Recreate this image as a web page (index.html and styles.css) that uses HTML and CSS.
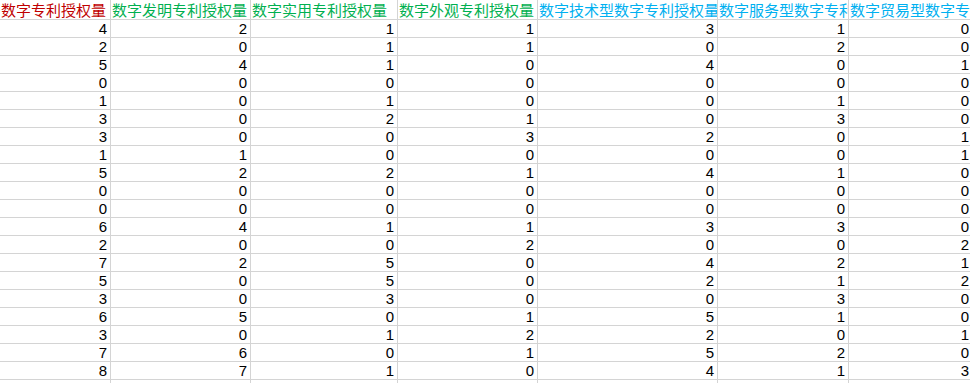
FILE: index.html
```html
<!DOCTYPE html>
<html lang="zh">
<head>
<meta charset="utf-8">
<title>Sheet</title>
<link rel="stylesheet" href="styles.css">
</head>
<body>
<div class="sheet" id="sheet">
  <div class="cell head red">数字专利授权量</div>
  <div class="cell head green">数字发明专利授权量</div>
  <div class="cell head green">数字实用专利授权量</div>
  <div class="cell head green">数字外观专利授权量</div>
  <div class="cell head blue">数字技术型数字专利授权量</div>
  <div class="cell head blue">数字服务型数字专利授权量</div>
  <div class="cell head blue">数字贸易型数字专利授权量</div>
</div>
<script src="app.js"></script>
</body>
</html>
```
FILE: app.js
```js
var rows = [
  [4,2,1,1,3,1,0],
  [2,0,1,1,0,2,0],
  [5,4,1,0,4,0,1],
  [0,0,0,0,0,0,0],
  [1,0,1,0,0,1,0],
  [3,0,2,1,0,3,0],
  [3,0,0,3,2,0,1],
  [1,1,0,0,0,0,1],
  [5,2,2,1,4,1,0],
  [0,0,0,0,0,0,0],
  [0,0,0,0,0,0,0],
  [6,4,1,1,3,3,0],
  [2,0,0,2,0,0,2],
  [7,2,5,0,4,2,1],
  [5,0,5,0,2,1,2],
  [3,0,3,0,0,3,0],
  [6,5,0,1,5,1,0],
  [3,0,1,2,2,0,1],
  [7,6,0,1,5,2,0],
  [8,7,1,0,4,1,3],
  ["","","","","","",""]
];
var sheet = document.getElementById('sheet');
rows.forEach(function (r) {
  r.forEach(function (v) {
    var d = document.createElement('div');
    d.className = 'cell num';
    d.textContent = v;
    sheet.appendChild(d);
  });
});
```
FILE: styles.css
```css
html, body {
  margin: 0;
  padding: 0;
  background: #ffffff;
  overflow: hidden;
}
.sheet {
  display: grid;
  grid-template-columns: 111px 140px 147px 140px 180px 131px 124px;
  grid-auto-rows: 18px;
  grid-template-rows: 20px;
  width: 973px;
}
.cell {
  box-sizing: border-box;
  border-right: 1px solid #d4d4d4;
  border-bottom: 1px solid #d4d4d4;
  overflow: hidden;
  white-space: nowrap;
}
.head {
  font-family: "Noto Sans CJK SC", "Noto Sans", sans-serif;
  font-size: 15px;
  line-height: 19px;
  padding-left: 1px;
  text-align: left;
}
.red { color: #c00000; }
.green { color: #00b050; }
.blue { color: #00b0f0; }
.num {
  font-family: "Liberation Sans", Arial, sans-serif;
  font-size: 15px;
  line-height: 18px;
  color: #000000;
  text-align: right;
  padding-right: 3px;
}
```
